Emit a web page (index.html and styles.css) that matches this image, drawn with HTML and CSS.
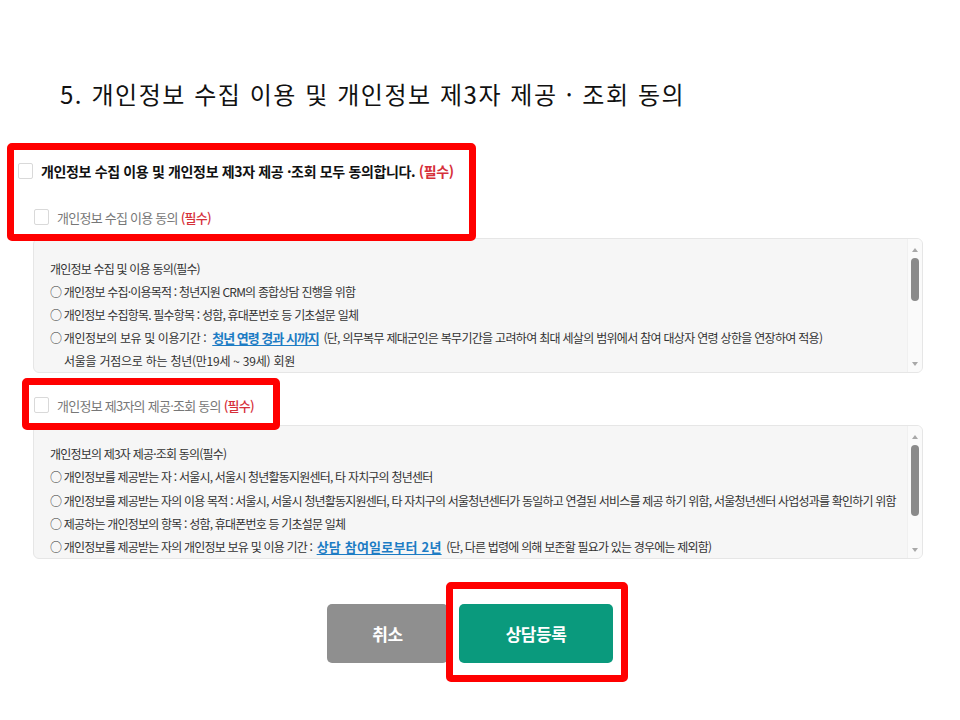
FILE: index.html
```html
<!DOCTYPE html>
<html lang="ko">
<head>
<meta charset="utf-8">
<title>개인정보 수집 이용 및 제3자 제공 동의</title>
<link rel="stylesheet" href="styles.css">
</head>
<body>
<div class="page">
  <h1 class="title">5. 개인정보 수집 이용 및 개인정보 제3자 제공 · 조회 동의</h1>

  <section class="consent">
    <label class="row row-all"><span class="cb"></span><span class="label">개인정보 수집 이용 및 개인정보 제3자 제공 ·조회 모두 동의합니다. <em class="req">(필수)</em></span></label>
    <label class="row row-sub"><span class="cb"></span><span class="label">개인정보 수집 이용 동의 <em class="req">(필수)</em></span></label>
    <div class="terms terms-1">
      <div class="terms-body">
        <p>개인정보 수집 및 이용 동의(필수)</p>
        <p>○ 개인정보 수집·이용목적 : 청년지원 CRM의 종합상담 진행을 위함</p>
        <p>○ 개인정보 수집항목. 필수항목 : 성함, 휴대폰번호 등 기초설문 일체</p>
        <p>○ <span class="pre1">개인정보의 보유 및 이용기간 :</span><a class="hl hl-1">청년 연령 경과 시까지</a> <span class="tight">(단, 의무복무 제대군인은 복무기간을 고려하여 최대 세살의 범위에서 참여 대상자 연령 상한을 연장하여 적용)</span></p>
        <p class="indent">서울을 거점으로 하는 청년(만19세 ~ 39세) 회원</p>
      </div>
      <div class="scrollbar"><span class="arrow up"></span><span class="thumb"></span><span class="spacer"></span><span class="arrow down"></span></div>
    </div>

    <label class="row row-sub row-sub2"><span class="cb"></span><span class="label">개인정보 제3자의 제공·조회 동의 <em class="req">(필수)</em></span></label>
    <div class="terms terms-2">
      <div class="terms-body">
        <p>개인정보의 제3자 제공·조회 동의(필수)</p>
        <p>○ 개인정보를 제공받는 자 : 서울시, 서울시 청년활동지원센터, 타 자치구의 청년센터</p>
        <p class="long">○ 개인정보를 제공받는 자의 이용 목적 : 서울시, 서울시 청년활동지원센터, 타 자치구의 서울청년센터가 동일하고 연결된 서비스를 제공 하기 위함, 서울청년센터 사업성과를 확인하기 위함</p>
        <p>○ 제공하는 개인정보의 항목 : 성함, 휴대폰번호 등 기초설문 일체</p>
        <p>○ 개인정보를 제공받는 자의 개인정보 보유 및 이용 기간 : <a class="hl hl-2">상담 참여일로부터 2년</a> <span class="tail2">(단, 다른 법령에 의해 보존할 필요가 있는 경우에는 제외함)</span></p>
      </div>
      <div class="scrollbar"><span class="arrow up"></span><span class="thumb thumb-long"></span><span class="spacer"></span><span class="arrow down"></span></div>
    </div>
  </section>

  <div class="actions">
    <button class="btn btn-cancel" type="button">취소</button>
    <button class="btn btn-submit" type="button">상담등록</button>
  </div>

  <div class="mark mark-1"></div>
  <div class="mark mark-2"></div>
  <div class="mark mark-3"></div>
</div>
</body>
</html>
```

FILE: styles.css
```css
* { box-sizing: border-box; }
html, body { margin: 0; padding: 0; background: #fff; }
body {
  font-family: "Noto Sans CJK KR", "Noto Sans", sans-serif;
  color: #222;
}
.page {
  position: relative;
  width: 960px;
  height: 720px;
  overflow: hidden;
}
.title {
  margin: 0;
  padding: 76px 0 0 60px;
  font-size: 24px;
  line-height: 35px;
  font-weight: 400;
  color: #111;
  letter-spacing: 1.55px;
}
.consent {
  margin-top: 48px;
}
.row {
  display: flex;
  align-items: center;
  height: 24px;
  gap: 8px;
}
.cb {
  flex: none;
  width: 15px;
  height: 16px;
  border: 1px solid #d9d9d9;
  border-radius: 2px;
  background: #fff;
}
.row-all {
  padding-left: 18px;
  font-size: 14px;
  font-weight: 700;
  color: #111;
  letter-spacing: -0.35px;
}
.row-sub {
  margin-top: 22px;
  padding-left: 34px;
  font-size: 13px;
  color: #777;
  letter-spacing: -0.75px;
}
.row-sub2 { margin-top: 20px; }
.req {
  font-style: normal;
  color: #d6303a;
  font-weight: 700;
}
.row-sub .req { font-weight: 500; }
.terms {
  display: flex;
  margin: 9px 0 0 33px;
  width: 890px;
  height: 135px;
  background: #f6f6f6;
  border: 1px solid #e6e6e6;
  border-radius: 6px;
  overflow: hidden;
}
.terms-2 { margin-top: 8px; height: 134px; }
.terms-body {
  flex: 1;
  padding: 18px 0 0 16px;
  font-size: 12px;
  line-height: 23px;
  color: #333;
  letter-spacing: -0.8px;
  white-space: nowrap;
  overflow: hidden;
}
.terms-2 .terms-body { padding-top: 16px; line-height: 23.3px; }
.terms-body p { margin: 0; height: 23px; }
.terms-2 .terms-body p { height: 23.3px; }
.terms-body .indent { padding-left: 14px; letter-spacing: -0.25px; }
.terms-body .long { letter-spacing: -0.8px; }
.pre1 { letter-spacing: -0.4px; }
.tight { letter-spacing: -0.7px; }
.tail2 { letter-spacing: -0.8px; }
.hl {
  margin: 0 2px;
  font-size: 13px;
  font-weight: 700;
  color: #1d7cc4;
  text-decoration: underline;
  text-underline-offset: 2px;
  line-height: 1;
}
.hl-1 { letter-spacing: -1.0px; margin-left: 6px; }
.hl-2 { letter-spacing: 0.2px; }
.scrollbar {
  flex: none;
  width: 15px;
  display: flex;
  flex-direction: column;
  align-items: center;
  padding: 9px 0 6px;
  background: #fafafa;
  border-left: 1px solid #f0f0f0;
}
.arrow {
  width: 0;
  height: 0;
  border-left: 3.5px solid transparent;
  border-right: 3.5px solid transparent;
}
.arrow.up { border-bottom: 4px solid #a8a8a8; }
.arrow.down { border-top: 4px solid #a8a8a8; }
.thumb {
  margin-top: 6px;
  width: 8px;
  height: 43px;
  border-radius: 4px;
  background: #8a8a8a;
}
.thumb-long { height: 71px; }
.spacer { flex: 1; }
.actions {
  display: flex;
  gap: 11px;
  margin-top: 45px;
  padding-left: 327px;
}
.btn {
  height: 59px;
  border: 0;
  border-radius: 5px;
  color: #fff;
  font-family: "Noto Sans CJK KR", "Noto Sans", sans-serif;
  font-size: 17px;
  font-weight: 700;
  letter-spacing: -0.5px;
}
.btn-cancel { width: 121px; background: #8f8f8f; }
.btn-submit { width: 154px; background: #0a9a7d; }
.mark {
  position: absolute;
  border: 7px solid #ff0000;
  border-radius: 5px;
}
.mark-1 { left: 7px; top: 143px; width: 469px; height: 98px; }
.mark-2 { left: 22px; top: 378px; width: 258px; height: 52px; }
.mark-3 { left: 446px; top: 582px; width: 182px; height: 100px; }
```
